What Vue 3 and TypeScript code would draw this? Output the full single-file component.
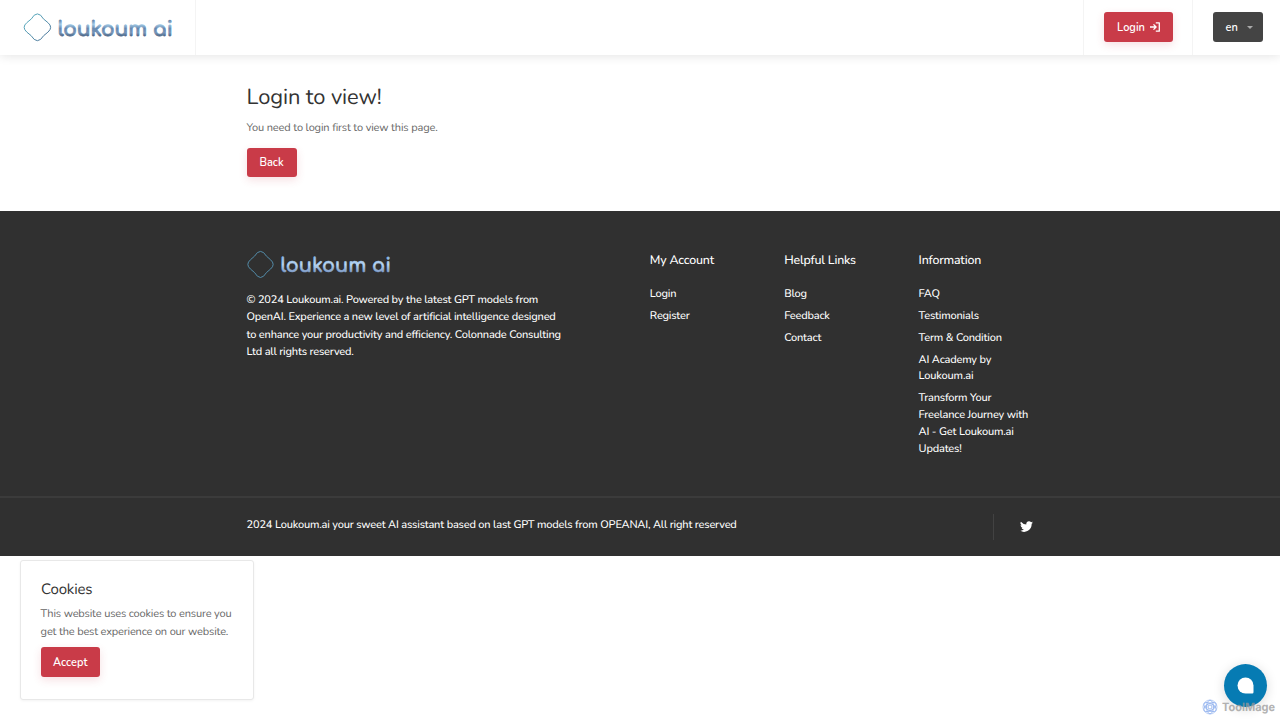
<script setup lang="ts">
interface FooterLink {
  lines: string[]
}
interface FooterColumn {
  title: string
  links: FooterLink[]
}

const columns: FooterColumn[] = [
  { title: 'My Account', links: [{ lines: ['Login'] }, { lines: ['Register'] }] },
  { title: 'Helpful Links', links: [{ lines: ['Blog'] }, { lines: ['Feedback'] }, { lines: ['Contact'] }] },
  {
    title: 'Information',
    links: [
      { lines: ['FAQ'] },
      { lines: ['Testimonials'] },
      { lines: ['Term & Condition'] },
      { lines: ['AI Academy by', 'Loukoum.ai'] },
      { lines: ['Transform Your', 'Freelance Journey with', 'AI - Get Loukoum.ai', 'Updates!'] },
    ],
  },
]

const about: string[] = [
  '© 2024 Loukoum.ai. Powered by the latest GPT models from',
  'OpenAI. Experience a new level of artificial intelligence designed',
  'to enhance your productivity and efficiency. Colonnade Consulting',
  'Ltd all rights reserved.',
]
</script>

<template>
  <div class="page">
    <header class="header">
      <div class="brand">
        <svg width="160" height="36" viewBox="0 0 160 36">
          <defs>
            <linearGradient id="wordLight" gradientUnits="userSpaceOnUse" x1="0" y1="8" x2="0" y2="25">
              <stop offset="0" stop-color="#5f7fa6" />
              <stop offset="0.25" stop-color="#a3cbe6" />
              <stop offset="0.5" stop-color="#6688b0" />
              <stop offset="0.75" stop-color="#7595b8" />
              <stop offset="1" stop-color="#3f5878" />
            </linearGradient>
            <linearGradient id="ringLight" x1="0" y1="0" x2="1" y2="1">
              <stop offset="0" stop-color="#58b4c4" />
              <stop offset="1" stop-color="#4a6c93" />
            </linearGradient>
          </defs>
          <path d="M12.2 3.2 Q15.4 .6 18.6 3.2 Q20.5 6.8 25.9 10.6 Q31.4 15.3 25.9 20.2 Q21.2 23.4 18.6 27.4 Q15.4 30 12.2 27.4 Q9.6 23.4 4.9 20.2 Q-.6 15.3 4.9 10.6 Q10.3 6.8 12.2 3.2Z" fill="none" stroke="url(#ringLight)" stroke-width="1" />
          <text x="35.8" y="23.8" class="word" textLength="115" lengthAdjust="spacingAndGlyphs" fill="url(#wordLight)" stroke="url(#wordLight)">loukoum ai</text>
        </svg>
      </div>
      <div class="header-right">
        <div class="cell login-cell">
          <button class="btn login">
            <span>Login</span>
            <svg width="10" height="10" viewBox="0 0 10 10" fill="none" stroke="#fff" stroke-width="1.3" stroke-linejoin="round">
              <path d="M5.8 .8H9.3V9.2H5.8M0 5H6M3.5 2.4L6.1 5L3.5 7.6" />
            </svg>
          </button>
        </div>
        <div class="cell lang-cell">
          <button class="lang"><span>en</span><i class="caret"></i></button>
        </div>
      </div>
    </header>

    <main class="main">
      <h1>Login to view!</h1>
      <p>You need to login first to view this page.</p>
      <button class="btn back">Back</button>
    </main>

    <footer class="footer">
      <div class="footer-top">
        <div class="about">
          <svg class="footer-logo" width="154" height="30" viewBox="0 0 154 30">
            <defs>
              <linearGradient id="wordDark" gradientUnits="userSpaceOnUse" x1="0" y1="6" x2="0" y2="23">
                <stop offset="0" stop-color="#86b1e2" />
                <stop offset="0.5" stop-color="#b8d6f3" />
                <stop offset="1" stop-color="#7895c2" />
              </linearGradient>
            </defs>
            <path d="M10.4 2.6 Q13.5 .2 16.6 2.6 Q18.9 6.2 23.5 9.7 Q28.8 14.4 23.5 19.1 Q18.9 22.4 16.6 26.2 Q13.5 28.8 10.4 26.2 Q8.1 22.4 3.5 19.1 Q-1.8 14.4 3.5 9.7 Q8.1 6.2 10.4 2.6Z" fill="none" stroke="#5795b5" stroke-width=".9" />
            <text x="33.5" y="22.3" class="word word-dark" textLength="110.5" lengthAdjust="spacingAndGlyphs" fill="url(#wordDark)" stroke="url(#wordDark)">loukoum ai</text>
          </svg>
          <p><span v-for="line in about" :key="line">{{ line }}</span></p>
        </div>
        <nav v-for="column in columns" :key="column.title" class="column">
          <h3>{{ column.title }}</h3>
          <ul>
            <li v-for="link in column.links" :key="link.lines[0]">
              <span v-for="line in link.lines" :key="line">{{ line }}</span>
            </li>
          </ul>
        </nav>
      </div>
      <div class="footer-bottom">
        <div class="bottom-inner">
          <span class="copyright">2024 Loukoum.ai your sweet AI assistant based on last GPT models from OPEANAI, All right reserved</span>
          <div class="social">
            <svg width="13" height="11" viewBox="0 2 24 20" fill="#fff">
              <path d="M24 4.6a10 10 0 0 1-2.8.8 5 5 0 0 0 2.1-2.7 10 10 0 0 1-3.1 1.2A4.9 4.9 0 0 0 11.8 8.4 14 14 0 0 1 1.7 3.2a4.9 4.9 0 0 0 1.5 6.6 5 5 0 0 1-2.2-.6 4.9 4.9 0 0 0 3.9 4.9 5 5 0 0 1-2.2.1 4.9 4.9 0 0 0 4.6 3.4A9.9 9.9 0 0 1 0 19.6 14 14 0 0 0 21.5 7.1 10 10 0 0 0 24 4.6z" />
            </svg>
          </div>
        </div>
      </div>
    </footer>

    <aside class="cookies">
      <h2>Cookies</h2>
      <p><span>This website uses cookies to ensure you</span><span>get the best experience on our website.</span></p>
      <button class="btn accept">Accept</button>
    </aside>

    <div class="chat">
      <svg width="17" height="17" viewBox="0 0 17 17"><path d="M8.5 .5a8 8 0 0 1 8 8v6.8q0 1.2-1.2 1.2H8.5a8 8 0 0 1 0-16z" fill="#fff" /></svg>
    </div>
    <div class="watermark">
      <svg width="16" height="16" viewBox="-8 -8 16 16" fill="none" stroke="#7da4ec" stroke-width="1">
        <ellipse v-for="n in 3" :key="n" rx="3.5" ry="6.8" :transform="`rotate(${n * 60})`" />
        <circle r="7" stroke-width=".7" />
        <circle r="2" />
      </svg>
      <svg width="56" height="18" viewBox="0 0 56 18"><text x="0" y="12.2" textLength="53" lengthAdjust="spacingAndGlyphs">ToolMage</text></svg>
    </div>
  </div>
</template>

<style>
body { background: #fff; overflow: hidden; }
</style>

<style scoped>
.page { position: relative; height: 720px; font-family: Nunito, Lato, sans-serif; font-size: 11px; letter-spacing: -.14px; color: #666; overflow: hidden; text-rendering: geometricPrecision; }
h1, h2, h3, p, ul { margin: 0; padding: 0; }
ul { list-style: none; }
button { font: inherit; border: 0; padding: 0; }
.header { height: 54.5px; display: flex; justify-content: space-between; background: #fff; box-shadow: 0 1px 10px rgba(0, 0, 0, .11); }
.brand { box-sizing: border-box; width: 196px; padding: 12px 0 0 22px; border-right: 1px solid #f4f4f4; }
.brand svg, .footer-logo { display: block; overflow: visible; }
.word { font-family: Comfortaa, Lato, sans-serif; font-size: 20.5px; font-weight: 700; stroke-width: .8px; letter-spacing: 0; }
.word-dark { font-size: 19.8px; stroke-width: .5px; }
.header-right { display: flex; }
.cell { box-sizing: border-box; border-left: 1px solid #f4f4f4; display: flex; align-items: center; padding-left: 20px; }
.login-cell { width: 109px; }
.lang-cell { width: 88px; }
.btn { display: flex; align-items: center; justify-content: center; height: 29.5px; border-radius: 3px; background: #c93b48; color: #fff; font-weight: 600; box-shadow: 0 3px 8px rgba(201, 59, 72, .16); }
.login { width: 69px; gap: 5px; }
.login, .lang { margin-bottom: .5px; }
.lang { display: flex; align-items: center; width: 50px; height: 29.5px; border-radius: 3px; background: #444; color: #fff; padding: 0 11.5px 0 12.5px; gap: 9px; font-weight: 600; }
.caret { border: 3px solid transparent; border-top-color: #aaa; border-bottom: 0; }
.main { box-sizing: border-box; height: 156px; padding: 29px 0 0 246.5px; }
h1 { font-size: 21.9px; line-height: 27px; font-weight: 370; letter-spacing: -.1px; color: #333; }
.main p { line-height: 18px; margin-top: 8px; }
.back { width: 50px; margin-top: 11px; }
.footer { height: 345.5px; background: #303030; color: #fff; font-weight: 500; letter-spacing: -.19px; }
.footer-top { box-sizing: border-box; height: 285.8px; padding: 39px 0 0 246.5px; display: flex; }
.about { width: 403.3px; }
.about p { margin-top: 11.3px; line-height: 17.4px; }
.about span, .column span, .cookies span { display: block; white-space: nowrap; }
.column { width: 134.4px; padding-top: 2px; }
h3 { font-size: 12.4px; line-height: 18px; font-weight: 500; }
.column ul { margin-top: 16.2px; }
.column li { line-height: 16.7px; margin-bottom: 5.3px; }
.footer-bottom { border-top: 2px solid #3b3b3b; height: 57.5px; }
.bottom-inner { width: 787px; margin-left: 246.3px; height: 57px; display: flex; align-items: center; justify-content: space-between; }
.copyright { white-space: nowrap; padding: 0 0 4px .3px; }
.social { box-sizing: border-box; width: 40px; height: 26px; border-left: 1px solid #424242; display: flex; align-items: center; justify-content: flex-end; }
.cookies { position: absolute; left: 20px; top: 560px; box-sizing: border-box; width: 233.5px; height: 140px; padding: 19px 20px; border: 1px solid #e8e8e8; border-radius: 3px; background: #fff; box-shadow: 0 1px 3px rgba(0, 0, 0, .05); }
h2 { font-size: 15px; line-height: 20px; font-weight: 400; color: #333; }
.cookies p { line-height: 18px; margin-top: 5.4px; margin-left: -.4px; letter-spacing: -.16px; }
.accept { width: 59.5px; margin: 6.1px 0 0 -.5px; }
.chat { position: absolute; left: 1224px; top: 664px; width: 43px; height: 43px; border-radius: 50%; background: #067bb3; box-shadow: 0 2px 12px rgba(0, 0, 0, .15); display: flex; align-items: center; justify-content: center; }
.watermark { position: absolute; left: 1202px; top: 699px; display: flex; gap: 4px; opacity: .75; }
.watermark text { font: 700 11.5px Inter, sans-serif; letter-spacing: 0; fill: #999; }
</style>
